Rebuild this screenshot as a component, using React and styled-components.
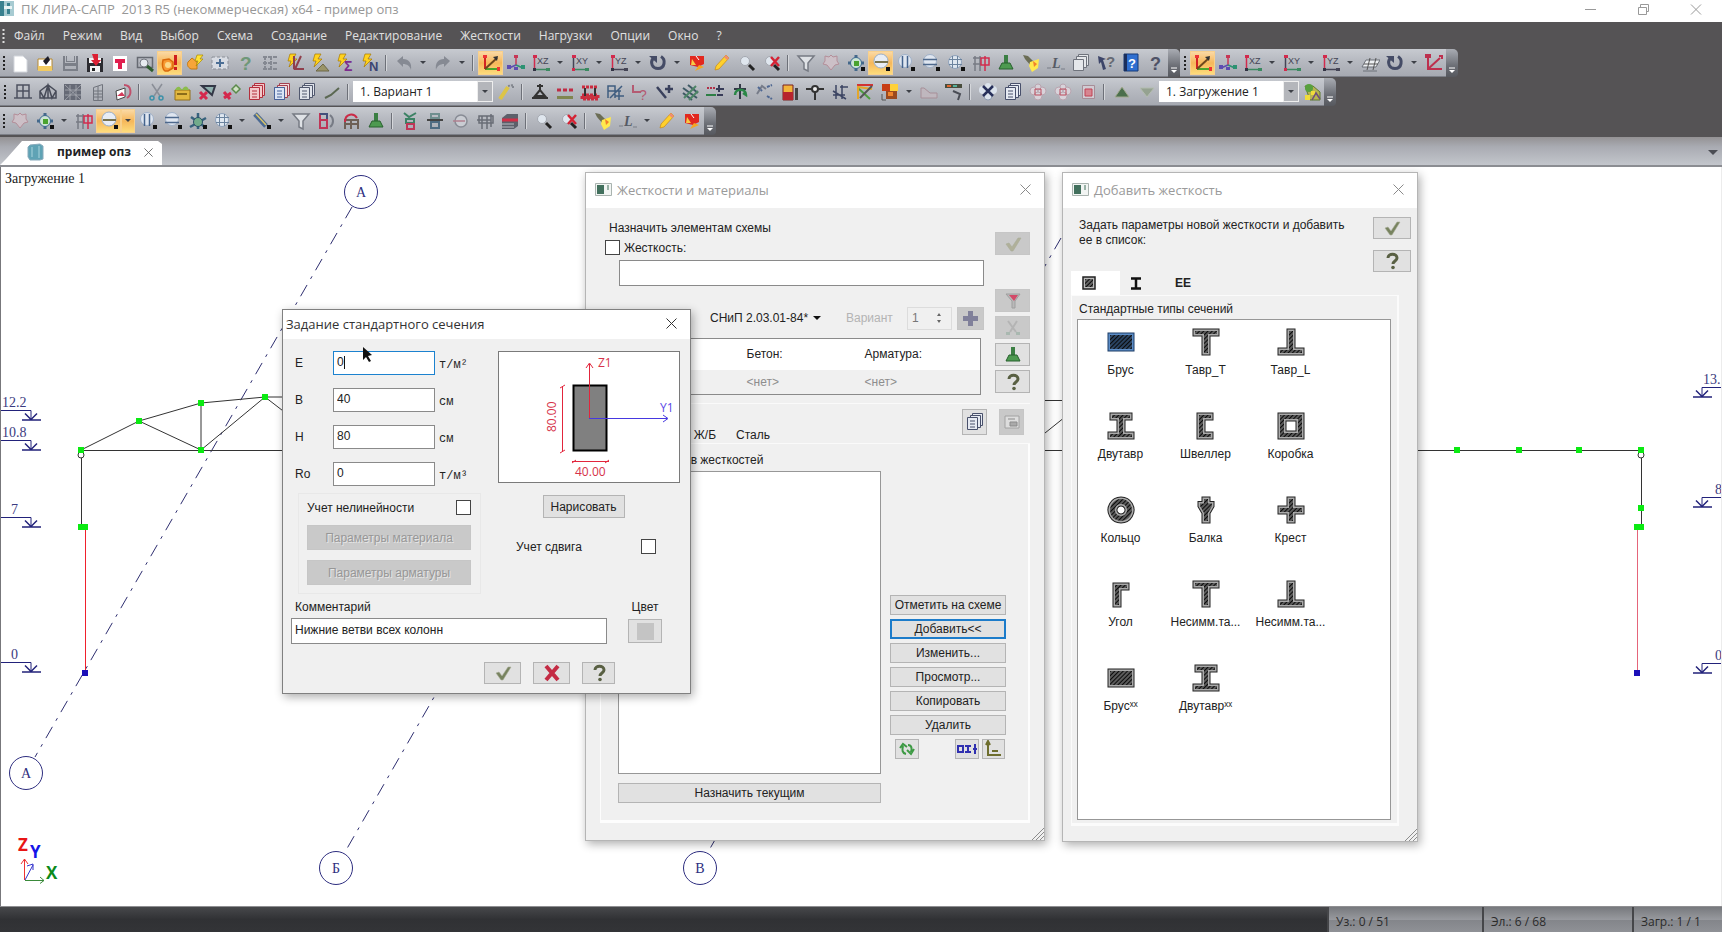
import React from 'react'
import styled, { createGlobalStyle, css } from 'styled-components'

const ui = "'Open Sans', 'Noto Sans', sans-serif"
const sans = "'Liberation Sans', Arial, sans-serif"
const serif = "'Liberation Serif', 'Times New Roman', serif"
const mono = "'Liberation Mono', 'Courier New', monospace"

const GlobalStyle = createGlobalStyle`
  * { box-sizing: border-box; }
  body { margin: 0; background: #555355; overflow: hidden; }
  button, input, select { font: inherit; color: inherit; margin: 0; }
  svg { display: block; }
`

const Page = styled.div`
  display: flex;
  flex-direction: column;
  min-height: 100vh;
  font-family: ${sans};
  font-size: 12px;
  color: #222;
`

/* ---------- window frame ---------- */

const TitleBar = styled.header`
  display: flex;
  align-items: center;
  height: 22px;
  background: #fff;
  color: #979797;
  font-family: ${ui};
  font-size: 13px;
  line-height: 18px;
  padding-bottom: 4px;
  gap: 5px;
`
const AppTitle = styled.span`
  flex: 1;
  white-space: pre;
`
const WindowButtons = styled.div`
  display: flex;
  gap: 33px;
  padding-right: 16px;
`
const PlainButton = styled.button`
  display: flex;
  align-items: center;
  justify-content: center;
  border: 0;
  padding: 0;
  background: none;
`
const MenuBar = styled.nav`
  display: flex;
  align-items: center;
  height: 27px;
  padding-left: 2px;
  background: #555355;
  color: #e0e0e0;
  font-family: ${ui};
  font-size: 12px;
  line-height: 16px;
`
const MenuItem = styled.a`
  color: inherit;
  text-decoration: none;
  padding: 0 9px;
`
const Grip = styled.span`
  width: ${p => (p.$wide ? 10 : 7)}px;
  height: 16px;
  background: radial-gradient(circle at 50% 2px, ${p => (p.$light ? '#ddd' : '#222')} 1px, transparent 1px) 0 0 / 6px 4px;
  background-repeat: repeat-y;
  background-position: center top;
  flex: none;
`

/* ---------- toolbars ---------- */

const ToolRow = styled.div`
  display: flex;
  height: ${p => p.$h}px;
  padding-bottom: 1px;
  background: #555355;
`
const ToolBar = styled.div`
  display: flex;
  align-items: center;
  height: 28px;
  background: linear-gradient(#c7cad0, #b6b9c0 45%, #a6a9b1);
  border-bottom: 1px solid #7c7f87;
`
const Tool = styled.button`
  display: flex;
  align-items: center;
  justify-content: center;
  width: 25px;
  height: 24px;
  padding: 0;
  flex: none;
  border: 1px solid transparent;
  background: none;
  ${p => p.$on && css`
    border-color: #f8d08c;
    background: linear-gradient(#fbd9a4, #f6b75a 50%, #fddc7c);
  `}
`
const Drop = styled(Tool)`
  width: 14px;
`
const Sep = styled.span`
  width: ${p => p.$w || 9}px;
  height: 16px;
  flex: none;
  background: linear-gradient(90deg, #6d7078 1px, #d5d7db 1px, #d5d7db 2px, transparent 2px) 3px 0 no-repeat;
`
const Cap = styled.button`
  display: flex;
  align-items: flex-end;
  justify-content: center;
  width: 12px;
  height: 28px;
  padding: 0 0 3px;
  border: 0;
  border-radius: 0 5px 4px 0;
  background: linear-gradient(#a9acb3, #6c6f76 60%, #56585e);
`
const Combo = styled.span`
  display: flex;
  align-items: stretch;
  width: 140px;
  height: 21px;
  background: #fff;
  font-family: ${ui};
  font-size: 12px;
`
const ComboSelect = styled.select`
  appearance: none;
  flex: 1;
  min-width: 0;
  border: 0;
  padding: 0 7px;
  background: none;
`
const ComboArrow = styled.span`
  display: flex;
  align-items: center;
  justify-content: center;
  width: 16px;
  border: 1px solid #eee;
  background: #b4b6bb;
`

const TabStrip = styled.div`
  display: flex;
  align-items: flex-end;
  justify-content: space-between;
  height: 30px;
  padding: 0 4px 0 0;
  background: linear-gradient(#949294, #a9abb2 35%, #c3c6cc);
  border-bottom: 2px solid #8b8d92;
`
const DocTab = styled.div`
  display: flex;
  align-items: center;
  height: 24px;
  width: 162px;
  padding: 0 0 2px 27px;
  background: #fff;
  clip-path: polygon(22px 0, 158px 0, 162px 3px, 162px 100%, 0 100%, 6px 18px);
  font: bold 12px/16px ${ui};
  gap: 13px;
`
const TabListButton = styled(PlainButton)`
  height: 26px;
`

/* ---------- work area ---------- */

const Canvas = styled.main`
  position: relative;
  flex: 1;
  background: #fff;
  border-left: 1px solid #77777b;
  border-right: 1px solid #ececec;
  overflow: hidden;
`
const Scene = styled.svg`
  width: 100%;
  height: auto;
  font-family: ${serif};
  font-size: 14px;
`
const StatusBar = styled.footer`
  display: flex;
  justify-content: flex-end;
  height: 26px;
  border-top: 1px solid #8f8f92;
  background: linear-gradient(#47484b, #303134 50%, #333437);
  font-family: ${ui};
  font-size: 12px;
`
const StatusCell = styled.span`
  display: flex;
  align-items: center;
  width: ${p => p.$w}px;
  padding: 4px 0 0 7px;
  border-left: 2px solid #454649;
  background: linear-gradient(#77797d, #97999e 50%, #83858a 52%, #8f9196);
  color: #2b2b2b;
  white-space: nowrap;
`

/* ---------- dialogs ---------- */

const Dialog = styled.section`
  position: absolute;
  left: ${p => p.$x}px;
  top: ${p => p.$y}px;
  width: ${p => p.$w}px;
  display: flex;
  flex-direction: column;
  border: 1px solid ${p => (p.$front ? '#808080' : '#b5b5b5')};
  background: #f0f0f0;
  box-shadow: 2px 3px 9px rgba(0, 0, 0, 0.32);
`
const DialogTitle = styled.header`
  display: flex;
  align-items: center;
  height: ${p => (p.$front ? 29 : 35)}px;
  padding: 0 13px 2px ${p => (p.$front ? 3 : 9)}px;
  gap: 5px;
  background: #fff;
  color: ${p => (p.$front ? '#333' : '#9a9a9a')};
  font-family: ${ui};
  font-size: 13px;
  line-height: 18px;
`
const TitleText = styled.h2`
  flex: 1;
  margin: 0;
  font: inherit;
`
const Columns = styled.div`
  display: flex;
  align-items: flex-start;
  justify-content: space-between;
`
const Stack = styled.div`
  display: flex;
  flex-direction: column;
  align-items: ${p => p.$align || 'stretch'};
  gap: ${p => p.$gap || 0}px;
`
const Caption = styled.label`
  line-height: 16px;
  white-space: nowrap;
  padding-left: ${p => p.$pad || 0}px;
`
const TextBox = styled.input`
  width: 100%;
  height: ${p => (p.$tall ? 26 : 24)}px;
  padding: 0 3px 2px;
  border: 1px solid ${p => (p.$active ? '#1c82cf' : '#8a8a8a')};
  background: #fff;
  outline: none;
`
const CheckBox = styled.input`
  appearance: none;
  width: 15px;
  height: 15px;
  flex: none;
  border: 1px solid #444;
  background: #fff;
`
const PushButton = styled.button`
  display: flex;
  align-items: center;
  justify-content: center;
  width: ${p => (p.$w ? p.$w + 'px' : '100%')};
  height: ${p => p.$h || 20}px;
  flex: none;
  padding: 0;
  border: ${p => (p.$active ? '2px solid #1d7cca' : '1px solid #b4b4b4')};
  background: #e1e1e1;
  white-space: nowrap;
  &:disabled {
    border-color: #c6c6c6;
    background: #c9c9c9;
    color: #979797;
    text-shadow: 1px 1px #e6e6e6;
  }
`
const Resize = styled.span`
  align-self: flex-end;
`

/* section parameters */
const ParamsBody = styled.div`
  display: flex;
  flex-direction: column;
  padding: 12px 8px 9px;
`
const ParamsTop = styled(Columns)`
  min-height: 248px;
  padding: 0 2px 0 4px;
`
const ParamGrid = styled.div`
  display: grid;
  grid-template-columns: 38px 102px 36px;
  align-items: center;
  row-gap: 13px;
`
const Unit = styled.span`
  padding: 3px 0 0 4px;
  font-family: ${mono};
  font-size: 12px;
`
const CaretBox = styled.span`
  position: relative;
  &::after {
    content: '';
    position: absolute;
    left: 11px;
    top: 5px;
    width: 1px;
    height: 13px;
    background: #111;
  }
`
const NonLinear = styled.div`
  display: flex;
  flex-direction: column;
  gap: 10px;
  width: 183px;
  margin: 7px 0 0 3px;
  padding: 6px 9px 8px 8px;
  border: 1px solid #e8e8e8;
`
const CheckLine = styled.div`
  display: flex;
  align-items: center;
  justify-content: space-between;
  width: 100%;
  height: 15px;
`
const Preview = styled.div`
  width: 182px;
  height: 132px;
  border: 1px solid #7a7a7a;
  background: #fff;
`
const DrawLine = styled.div`
  padding-right: 11px;
`
const ShearLine = styled(CheckLine)`
  padding: 0 24px 0 18px;
  margin-top: 9px;
`
const CommentRow = styled.div`
  display: flex;
  gap: 21px;
`
const CommentField = styled.div`
  display: flex;
  flex-direction: column;
  gap: 3px;
  width: 316px;
`
const Swatch = styled.span`
  width: 17px;
  height: 17px;
  background: #c4c4c4;
`
const Confirm = styled.div`
  display: flex;
  justify-content: flex-end;
  gap: 12px;
  padding: 18px 67px 0 0;
`

/* stiffness list */
const StiffBody = styled.div`
  display: flex;
  flex-direction: column;
  padding: 12px 14px 0 19px;
`
const AssignMain = styled.div`
  width: 379px;
  display: flex;
  flex-direction: column;
`
const CheckLabel = styled.label`
  display: flex;
  align-items: center;
  gap: 4px;
  height: 15px;
  margin: 4px 0 5px;
`
const Indent = styled.div`
  padding-left: 14px;
`
const NormRow = styled.div`
  display: flex;
  align-items: center;
  justify-content: flex-end;
  margin: 20px 0 8px;
  height: 24px;
`
const NormSelect = styled.label`
  display: flex;
  align-items: center;
  margin-right: 25px;
  select {
    appearance: none;
    border: 0;
    background: none;
    padding: 0 4px 0 0;
  }
`
const Dim = styled.label`
  width: 61px;
  color: #b4b4b4;
`
const Spin = styled.div`
  display: flex;
  align-items: center;
  width: 45px;
  height: 23px;
  margin-right: 5px;
  border: 1px solid #dcdcdc;
  input {
    width: 28px;
    border: 0;
    background: none;
    padding: 0 4px;
    color: #777;
  }
`
const Materials = styled.table`
  width: 364px;
  margin-left: 12px;
  height: 56px;
  border-collapse: collapse;
  border: 1px solid #8a8a8a;
  th, td {
    padding: 0;
    text-align: left;
    font-weight: normal;
  }
  th { height: 31px; background: #fff; }
  td { height: 25px; color: #8d8d8d; }
`
const SideTools = styled.div`
  display: flex;
  flex-direction: column;
  gap: 4px;
  padding-top: 12px;
  button:first-child { margin-bottom: 30px; }
`
const StiffTabs = styled.div`
  display: flex;
  align-items: flex-end;
  justify-content: flex-end;
  height: 41px;
  margin-top: 8px;
  padding-right: 6px;
  border-top: 1px solid #fafafa;
  border-bottom: 1px solid #fafafa;
`
const StiffTab = styled.button`
  border: 0;
  background: none;
  padding: 0;
  line-height: 16px;
  margin-right: ${p => p.$after}px;
`
const SquareTools = styled.div`
  display: flex;
  gap: 12px;
  align-self: flex-start;
  padding-top: 5px;
`
const StiffPanel = styled.div`
  display: flex;
  align-items: flex-end;
  justify-content: space-between;
  margin-left: -5px;
  padding: 8px 22px 17px 17px;
  border: solid #fdfdfd;
  border-width: 0 2px 3px 1px;
`
const ListBox = styled.div`
  width: ${p => p.$w}px;
  height: ${p => p.$h}px;
  margin: 3px 0 9px;
  border: 1px solid #979797;
  background: #fff;
`
const Actions = styled.div`
  display: flex;
  flex-direction: column;
  gap: 4px;
  width: 116px;
  padding-bottom: 44px;
`
const SmallTools = styled.div`
  display: flex;
  gap: 3px;
  padding: 0 0 0 5px;
  button:first-child { margin-right: 33px; }
`

/* section picker */
const PickBody = styled.div`
  display: flex;
  flex-direction: column;
  padding: 9px 6px 0 8px;
`
const PickHead = styled(Columns)`
  height: 54px;
  padding-left: 8px;
  p {
    margin: 1px 0 0;
    width: 290px;
    line-height: 15px;
  }
`
const PickTabs = styled.div`
  display: flex;
  align-items: flex-end;
  height: 24px;
`
const PickTab = styled.button`
  display: flex;
  align-items: center;
  justify-content: ${p => (p.$on ? 'flex-start' : 'center')};
  width: ${p => p.$w}px;
  height: 24px;
  padding: 0 0 0 ${p => (p.$on ? 11 : 0)}px;
  border: 0;
  background: ${p => (p.$on ? '#fff' : 'none')};
  font-weight: bold;
`
const PickPanel = styled.div`
  margin-right: 12px;
  padding: 5px 6px 3px 5px;
  border: 1px solid #fbfbfb;
  border-right-width: 2px;
  border-bottom-width: 3px;
  h3 { margin: 0 0 0 2px; font: inherit; line-height: 16px; }
`
const SectionList = styled.div`
  display: grid;
  grid-template-columns: repeat(3, 85px);
  grid-auto-rows: 84px;
  height: 501px;
  margin-top: 2px;
  border: 1px solid #979797;
  background: #fff;
`
const SectionItem = styled.button`
  display: flex;
  flex-direction: column;
  align-items: center;
  gap: 6px;
  padding: 8px 0 0;
  border: 0;
  background: none;
  line-height: 16px;
  white-space: nowrap;
`
const DialogFoot = styled.div`
  display: flex;
  justify-content: flex-end;
  align-items: flex-end;
  height: ${p => p.$h}px;
`
const Pointer = styled.svg`
  position: absolute;
  left: 362px;
  top: 180px;
`

/* ---------- icons ---------- */

const Bolt = () => <path d='M5 1h6l-3 5h4L4 14l2-6H3z' fill='#ffd21e' stroke='#a87a00' strokeWidth='.7' />
const Lens = () => (
  <g>
    <circle cx='8' cy='8' r='4.5' fill='#dfe6ee' stroke='#a4a8b0' />
    <path d='M12 12l5 5' stroke='#222' strokeWidth='3' />
  </g>
)
const Dot = () => <path d='M15 14h4v4h-4z' fill='#111' />
const Plane = ({ t, a, b }) => (
  <g>
    <path d='M3.500 2v14' stroke={a} strokeWidth='1.500' />
    <path d='M3 16.500h15' stroke={b} strokeWidth='1.500' />
    <path d='M2 2h4v3h-4z' fill='#d22a4c' /><path d='M15 15h4v3h-4z' fill={b} /><path d='M2 15h3v3h-3z' fill={a === '#445' ? '#d22a4c' : '#334'} />
    <text x='6' y='11' fontSize='9' fontFamily='Liberation Sans' fill='#445'>{t}</text>
  </g>
)
const Pages = ({ c, f = '#fff' }) => (
  <g fill={f} stroke={c}>
    <path d='M7.500 1.500h10v12h-10z' /><path d='M5.500 3.500h10v12h-10z' /><path d='M2.500 5.500h10v12h-10z' />
    <path d='M5 9h5M5 12h5M5 15h5' />
  </g>
)

const icons = {
  create: <path d='M4 3h9l4 4v12H4z' fill='#fff' stroke='#d3d6dc' />,
  open: <g><path d='M3 6h14v11H3z' fill='#fff' stroke='#b88a2e' /><path d='M3 13h14v5H3z' fill='#f1ca62' /><path d='M13 3l-5 5 3 4 4-5z' fill='#1d1d28' /></g>,
  save: <g fill='#7b7f88'><path d='M3 3h2v15H3zM16 3h2v15h-2zM3 10h15v3H3zM6 3h1v5h7V3h1v6H6zM5 16h12v2H5z' /></g>,
  saveAs: <g><path d='M2 5h16v14H2z' fill='#2b2b30' /><path d='M4 5h12v5H4zM5 13h10v6H5z' fill='#f4f4f4' /><path d='M7 1h6v6h3l-5 6-5-6h3z' fill='#dc2033' /><path d='M7 15h3v3H7z' fill='#222' /></g>,
  report: <g><path d='M3 3h14v15H3z' fill='#fff' /><path d='M5 6h10v4h-3v6H8v-6H5z' fill='#e01f4f' /></g>,
  preview: <g><path d='M2.500 4.500h15v10h-15z' fill='none' stroke='#666a72' strokeWidth='1.500' /><circle cx='9' cy='10' r='4' fill='#e7ebef' stroke='#747881' /><path d='M12 13l6 5' stroke='#2e5b2e' strokeWidth='3' /></g>,
  pack: <g><path d='M3 7l6-1 4 3v6l-5 3H5c-3-2-3-6-2-11z' fill='#f79a33' stroke='#d9690b' strokeWidth='1.500' /><circle cx='8' cy='12' r='3' fill='#fbd98a' /><path d='M14 2h3v10h-3zM14 14h3v3h-3z' fill='#cf1d1d' /></g>,
  calc: <g><path d='M3 9l4-4 5 4v7H6c-4-2-4-5-3-7z' fill='#f7a53a' stroke='#c47a15' /><path d='M12 2h6l-3 4h3l-7 7 2-5h-3z' fill='#ffe338' stroke='#a98800' strokeWidth='.7' /></g>,
  settings: <g><path d='M2 4h16v12H2z' fill='#d8dce3' stroke='#8b9099' strokeDasharray='3 2' /><path d='M9 6h2v3h3v2h-3v3H9v-3H6V9h3z' fill='#4c6f96' /></g>,
  ask: <text x='5' y='17' fontSize='19' fontWeight='bold' fontFamily='Liberation Sans' fill='#6f9878'>?</text>,
  tableGray: <g stroke='#858992' fill='none'><path d='M3 4h14M3 10h14M3 16h14M5 3v14M11 3v14' strokeWidth='2' strokeDasharray='4 1' /></g>,
  boltL: <g><Bolt /><path d='M9 3v13M16 3l-6 13h9' stroke='#8f3f4c' fill='none' strokeWidth='2' /></g>,
  boltTri: <g><Bolt /><path d='M6 18l7-7 6 7z' fill='#9a9468' stroke='#6c6747' /></g>,
  boltE: <g><Bolt /><text x='9' y='18' fontSize='14' fontWeight='bold' fontFamily='Liberation Sans' fill='#7c2c8e'>Σ</text></g>,
  boltN: <g><Bolt /><text x='9' y='18' fontSize='13' fontWeight='bold' fontFamily='Liberation Sans' fill='#3c4573'>N</text></g>,
  undo: <path d='M3 8l6-5v3c6 0 9 4 8 11-1-4-4-6-8-6v3z' fill='#868a93' />,
  redo: <path d='M17 8l-6-5v3c-6 0-9 4-8 11 1-4 4-6 8-6v3z' fill='#868a93' />,
  axes: <g strokeWidth='2' fill='none'><path d='M4 2v14' stroke='#d22323' /><path d='M4 16h14' stroke='#4aa52c' /><path d='M4 16L16 5' stroke='#70481d' /><path d='M17 3l-1 5-4-4z' fill='#333' stroke='none' /><path d='M2 2h4v3H2zM16 14h3v4h-3z' fill='#e33' stroke='none' /></g>,
  axes3: <g strokeWidth='1.500'><path d='M10 2v10' stroke='#c73756' /><path d='M10 12l-7 3' stroke='#5d4cb1' /><path d='M10 12l7 3' stroke='#2c9272' /><path d='M8 2h4v3H8z' fill='#c73756' /><path d='M1 12h4v4H1zM8 14h4v3H8z' fill='#5d4cb1' /><path d='M15 12h4v4h-4z' fill='#2c9272' /></g>,
  xz: <Plane t='XZ' a='#d22a4c' b='#3b8a60' />,
  xy: <Plane t='XY' a='#445' b='#3b8a60' />,
  yz: <Plane t='YZ' a='#d22a4c' b='#445' />,
  rotate: <g><path d='M5 5.500c-3 4-1 10 5 10 7 0 8-9 3-12' fill='none' stroke='#454c66' strokeWidth='3' /><path d='M1 3h8v7z' fill='#454c66' /></g>,
  fit: <g><path d='M3 3h14v8l-6 3-8-2z' fill='#e2281f' /><path d='M4 12h5l-4-6z' fill='#f7c945' /><path d='M8 18l4-6 5 2z' fill='#f5a623' /><path d='M9 3l3 4' stroke='#fff' /></g>,
  pencil: <g><path d='M3 17l1-4L14 2l3 3L7 16z' fill='#ffd02c' stroke='#c88a12' strokeWidth='.7' /><path d='M14 2l3 3-2 2-3-3z' fill='#ee8d75' /></g>,
  pan: <Lens />,
  zoomOff: <g><Lens /><path d='M9 4l8 9M17 4l-8 9' stroke='#d52334' strokeWidth='2.500' /></g>,
  filter: <path d='M2 3h16l-6 7v8l-4-2v-6z' fill='#dfe2e6' stroke='#777b84' strokeWidth='1.500' />,
  poly: <path d='M4 3l4 1 2-2 2 2 4-1v5l2 3-4 1-4 5-4-5-4-1 2-3z' fill='#ccc0c7' stroke='#b48e99' />,
  nodes: <g><path d='M10 2v16M2 10h16' stroke='#44688a' strokeWidth='3' /><circle cx='10' cy='10' r='5.500' fill='#cde4d4' stroke='#3c6892' /><path d='M8 8h5v5H8z' fill='#4aa32f' /><Dot /></g>,
  elemY: <g><circle cx='10' cy='8' r='7' fill='#e8edf5' stroke='#9aafc9' /><path d='M4 8h13v2H4z' fill='#77724e' /><Dot /></g>,
  elemX: <g><circle cx='9' cy='8' r='6.500' fill='#dfe6f0' stroke='#9fb0c8' /><path d='M6.500 3v12M11.500 3v12' stroke='#44638d' strokeWidth='1.500' /><Dot /></g>,
  elemH: <g><circle cx='9' cy='8' r='6.500' fill='#dfe6f0' stroke='#9fb0c8' /><path d='M2 6.500h14M2 11.500h14' stroke='#4d688c' strokeWidth='1.500' /><Dot /></g>,
  elemGrid: <g><circle cx='9' cy='9' r='6.500' fill='#dfe7f0' stroke='#8fa2bb' /><path d='M3 6.500h13M3 11.500h13M6.500 3v12M11.500 3v12' stroke='#6b839e' /><Dot /></g>,
  star: <g><path d='M10 2v16M2 16l16-9M3 6l14 10' stroke='#37627d' strokeWidth='2.500' /><circle cx='10' cy='11' r='4.500' fill='#72ab8b' stroke='#2c506a' /><Dot /></g>,
  tool: <g><path d='M3 3l11 12' stroke='#4c6a93' strokeWidth='5' /><path d='M4 3l10 11' stroke='#d8c569' strokeWidth='1.500' /><Dot /></g>,
  frame: <g fill='none' strokeWidth='1.500'><path d='M4 3v15M9 3v15M2 5h8M2 11h8' stroke='#777b84' /><path d='M10 5h8v7h-8zM14 3v15' stroke='#d22c4d' /></g>,
  person: <g><path d='M8 2h4v9H8z' fill='#3b7f43' /><path d='M6 10h8l3 6H3z' fill='#4d9a50' stroke='#28602e' /></g>,
  torch: <g><path d='M2 2l5 1 7 7-4 3-6-7z' fill='#6b6d55' /><path d='M9 9l9-3-1 9-6 4-3-6z' fill='#ffe94d' /><path d='M12 8l4 3-3 3z' fill='#f0812b' /></g>,
  origin: <g><text x='6' y='15' fontSize='14' fontStyle='italic' fontWeight='bold' fontFamily='Liberation Serif' fill='#555a64'>L</text><path d='M1 15h4M15 16h4' stroke='#8b8f98' strokeWidth='1.500' /></g>,
  copy: <g fill='#e5e7ea' stroke='#6f737c'><path d='M7.500 1.500h10v11h-10z' /><path d='M5.500 3.500h10v11h-10z' /><path d='M2.500 6.500h10v11h-10z' /></g>,
  whats: <g><path d='M2 3l8 3-3 1 3 9-3 1-2-8-2 2z' fill='#3d4569' /><text x='10' y='14' fontSize='15' fontWeight='bold' fontFamily='Liberation Sans' fill='#666a73'>?</text></g>,
  book: <g><path d='M3 1h14v17H3z' fill='#2f6fd0' stroke='#173a78' /><path d='M3 1h3v17H3z' fill='#1b2f5c' /><text x='7' y='15' fontSize='13' fontWeight='bold' fontFamily='Liberation Sans' fill='#fff'>?</text></g>,
  question: <text x='4' y='17' fontSize='18' fontWeight='bold' fontFamily='Liberation Sans' fill='#4e5266'>?</text>,
  slabs: <g><path d='M2 14l4-7h14l-4 7zM3 18h14' fill='#eef0f2' stroke='#6d7179' /><path d='M7 17l3-12M13 17l3-12M4 11h14' stroke='#555' /></g>,
  axesRed: <g strokeWidth='2' stroke='#bd304e' fill='none'><path d='M4 2v14h14M4 16L16 5' /><path d='M2 2h4v2H2zM15 3h3v3' /></g>,

  windows: <path d='M4 3h12v13H4zM10 3v13M4 9h12M1 16h18' fill='none' stroke='#4d5160' strokeWidth='1.500' />,
  dome: <path d='M2 16V9l8-6 8 6v7zM10 3v13M2 9l4 7 4-13 4 13 4-7' fill='none' stroke='#474b58' strokeWidth='1.500' />,
  mesh: <g><path d='M1 2h17v16H1z' fill='#666a76' /><path d='M2 8h16M2 13h16M7 3v15M13 3v15M2 3l16 15M18 3L2 18' stroke='#a9acb4' strokeWidth='.8' /></g>,
  tower: <g fill='none' stroke='#70747d'><path d='M5.500 5.500l9-3v16h-9zM5 9h10M5 12h10M5 15h10M10 4v14' /></g>,
  reload: <g><path d='M3 9l9-3v9l-8 3z' fill='#fff' stroke='#444' /><path d='M4 14l5-4 3 4' fill='#d33b5b' /><path d='M11 3c8 0 8 10 3 13' fill='none' stroke='#c0506b' strokeWidth='2' /></g>,
  cut: <g strokeWidth='1.500' fill='none'><path d='M5 2l8 12M15 2L7 14' stroke='#8a8e97' /><circle cx='5' cy='16' r='2' stroke='#3c91a9' /><circle cx='14' cy='16' r='2' stroke='#3c91a9' /></g>,
  box: <g><path d='M3 8h15v10H3z' fill='#e3b83f' stroke='#94701b' /><path d='M3 8c3-6 6-2 7 0 3-6 6-3 7 0z' fill='#8cbc4c' /><path d='M5 12h10' stroke='#8b6c1a' strokeWidth='2' /></g>,
  delElem: <g><path d='M5 4h13l-3 9z' fill='#8fb0ae' stroke='#333746' strokeWidth='2' /><path d='M3 10l7 7M10 10l-7 7' stroke='#d4284d' strokeWidth='3' /></g>,
  delNode: <g><path d='M10 7l4-4 4 4-4 4z' fill='#cfe0c3' stroke='#5a8a4a' strokeWidth='1.500' /><path d='M2 10l6 7M9 11l-7 5' stroke='#d4284d' strokeWidth='3' /></g>,
  pagesRed: <Pages c='#b32f3d' f='#f2c8c9' />,
  pagesMix: <g><Pages c='#a4404f' f='#f2dcdc' /><path d='M2.500 5.500h10v12h-10z' fill='#dbe5f5' stroke='#46639a' /><path d='M5 9h5M5 12h5M5 15h5' stroke='#46639a' /></g>,
  pagesBlue: <Pages c='#51586e' f='#dfe3ea' />,
  wand: <path d='M3 16l6-3 8-7' fill='none' stroke='#5b6852' strokeWidth='2' />,
  editGray: <g><path d='M4 17L12 5' stroke='#dcc447' strokeWidth='4' /><path d='M12 4l5-1v4' fill='none' stroke='#83878f' strokeDasharray='2 1' strokeWidth='2' /></g>,
  support: <path d='M10 2v6M7 4h6M10 8l-5 6h10zM2 16h16' fill='none' stroke='#333' strokeWidth='2' />,
  rigid: <g><path d='M2 14h16v3H2z' fill='#7f8650' /><path d='M2 8h16' stroke='#c02c45' strokeWidth='3' strokeDasharray='4 2' /></g>,
  redFrame: <g><path d='M2 5h16M2 13h16v4H2z' stroke='#cc2c3f' fill='#c73a42' strokeWidth='3' strokeDasharray='3 1' /><path d='M5 6v8M15 6v8' stroke='#333' strokeWidth='2' /></g>,
  blueFrame: <g stroke='#3f5d80' fill='none' strokeWidth='1.500'><path d='M3 16V4h7v12M3 9h13M5 16l12-12M14 9v9M10 14h9' /></g>,
  hinge: <g><path d='M3 3v7h8' stroke='#b45b72' fill='none' strokeWidth='2' /><text x='9' y='18' fontSize='14' fontFamily='Liberation Sans' fill='#b45b72'>?</text></g>,
  addBar: <path d='M2 5l9 11M14 3v8M10 7h8' fill='none' stroke='#39405c' strokeWidth='2.500' />,
  addMesh: <g stroke='#3e5964' strokeWidth='2'><path d='M3 6l14 10M3 11l9 7M8 3l10 8' /><path d='M4 16L16 4M9 18l9-9' stroke='#4d8566' /></g>,
  addLoad: <g strokeWidth='2'><path d='M1 13h10' stroke='#2d7f45' /><path d='M2 6h8' stroke='#b13048' strokeDasharray='2 1' /><path d='M14 3v7M11 7h8M12 13h6' stroke='#383c58' /></g>,
  moment: <g><path d='M10 2v15M4 7h12' stroke='#333846' strokeWidth='2' /><path d='M5 13c0-7 11-7 11 0l-3-2' stroke='#2a8746' fill='none' strokeWidth='2.500' /></g>,
  local: <g strokeWidth='2' fill='none'><path d='M2 12l5-8 4 3' stroke='#777c89' /><path d='M12 14l5 3M12 5l5-2M3 5l4 4' stroke='#4e6792' strokeDasharray='3 1' /></g>,
  stiff: <g><path d='M3 3h10v15H3z' fill='#f3b43a' stroke='#7a2020' /><path d='M3 10h10v8H3z' fill='#b7232d' /><path d='M15 6h3v12h-3z' fill='#444' /></g>,
  tee: <g stroke='#333' fill='none' strokeWidth='2'><path d='M1 7h6M13 7h6M10 10v8' /><circle cx='10' cy='7' r='3' fill='#eee' /></g>,
  crossBars: <path d='M3 9l13 8M3 13h12M6 3v14M12 3v14M10 5h8' fill='none' stroke='#3c4563' strokeWidth='1.500' />,
  rainbow: <g strokeWidth='2' fill='none'><path d='M2 3h16' stroke='#d13333' /><path d='M3 6l12 11' stroke='#4d9e3e' /><path d='M3 17V5l14 2' stroke='#e3a62b' /><path d='M5 16l12-12' stroke='#555' /></g>,
  palette: <g><path d='M2 2h8v7H2z' fill='#c73d15' /><path d='M10 2h8v7h-8z' fill='#ffd13a' /><path d='M6 9h11v8H6z' fill='#9c4a1e' /><path d='M8 10h5v4H8z' fill='#f0842c' /><path d='M2 12v6h4' stroke='#555' fill='none' /></g>,
  slope: <path d='M2 6h3l6 5h7v5H2z' fill='#bfb7be' stroke='#a78f98' />,
  ruler: <g><path d='M1 2h17v4H1z' fill='#494d3c' /><path d='M3 3h4v2H3z' fill='#e3672d' /><path d='M9 3h4v2H9z' fill='#55b09a' /><path d='M9 9l7 3-2 6' stroke='#4a4d55' fill='none' strokeWidth='2' /></g>,
  knot: <g><circle cx='5' cy='8' r='4' fill='#dbe3ec' /><circle cx='15' cy='8' r='4' fill='#dbe3ec' /><circle cx='10' cy='14' r='4' fill='#dbe3ec' stroke='#8e9bb0' /><circle cx='10' cy='4' r='3' fill='#dbe3ec' /><path d='M5 4l10 10M15 4L5 14' stroke='#27305a' strokeWidth='2.500' /></g>,
  pagesNum: <Pages c='#48506b' f='#e6eaf2' />,
  knotRed: <g fill='#d8d3da' stroke='#b9a5b0'><circle cx='6' cy='9' r='4' /><circle cx='14' cy='9' r='4' /><circle cx='10' cy='5' r='3' /><circle cx='10' cy='14' r='4' /><path d='M7 7h6v6H7z' stroke='#bd4a5c' fill='none' /></g>,
  square: <g fill='none' stroke='#a78d97'><path d='M4.500 3.500h12v13h-12z' fill='#d1ccd3' /><path d='M7 7h7v7H7z' stroke='#c04255' fill='#d78590' /></g>,
  up: <path d='M3 15l7-10 7 10z' fill='#4b6f4c' stroke='#a3aa90' />,
  down: <path d='M3 6h14l-7 9z' fill='#95a291' stroke='#b3bcb0' />,
  loads: <g><path d='M3 4h8l7 6v8H8z' fill='#b7b451' stroke='#5f7a31' /><circle cx='7' cy='6' r='4' fill='#58a03d' /><path d='M3 13h5v5H3zM9 9h4v4H9z' fill='#f0dc3a' /><path d='M10 18l4-7 4 6' fill='none' stroke='#6d4d7c' strokeWidth='1.500' /></g>,
  mirror: <g fill='none' strokeWidth='2'><path d='M4 3h7v14H4zM3 9h9' stroke='#bf3657' /><path d='M4 3h7v5' stroke='#44507c' /><path d='M14 4c4 3 4 9 0 12' stroke='#777b85' /></g>,
  arcFrame: <g fill='none' strokeWidth='2'><path d='M4 18V9h13v9M4 13h13M10 9v9' stroke='#6d5f55' /><path d='M4 11c0-9 9-9 12-4' stroke='#cb2c48' /></g>,
  checkFrame: <g fill='none' strokeWidth='2'><path d='M6 8h8v4H6zM4 2l5 4 7-4' stroke='#3c8264' /><path d='M7 13h7v5H7z' stroke='#bf3657' /></g>,
  grayFrame: <g fill='none' strokeWidth='2'><path d='M6 3h8v4H6z' stroke='#6f8f8f' /><path d='M2 9h16' stroke='#444' /><path d='M6 11h8v6H6z' stroke='#4f6c82' /></g>,
  cylinder: <g fill='#c9ccd2' stroke='#888c95' strokeWidth='1.500'><circle cx='11' cy='10' r='6' /><path d='M3 10h12' stroke='#b0808f' /></g>,
  scaffold: <path d='M4 5h14v7H4zM7 5v13M12 5v13M16 3v13M2 9h14' fill='none' stroke='#696d76' strokeWidth='1.500' />,
  building: <g><path d='M2 7l5-4h11v12l-4 3H2z' fill='#5c606a' /><path d='M2 9h16' stroke='#d12f46' strokeWidth='3' /><path d='M2 13h12M2 16h12' stroke='#b9bcc3' /></g>
}

const Icon = ({ name }) => <svg width='20' height='20' viewBox='0 0 20 20' aria-hidden='true'>{icons[name]}</svg>

const Triangle = ({ c = '#3d4047', s = 6 }) => (
  <svg width={s} height={s / 2} viewBox='0 0 6 3' aria-hidden='true'><path d='M0 0h6L3 3z' fill={c} /></svg>
)
const Cross = ({ c, s = 11 }) => (
  <svg width={s} height={s} viewBox='0 0 11 11' aria-hidden='true'><path d='M.5.5l10 10M10.500.5l-10 10' stroke={c} fill='none' /></svg>
)

const topTools = ['create', 'open', 'save', 'saveAs', 'report', 'preview', '*pack', 'calc', 'settings', 'ask', 'tableGray', 'boltL', 'boltTri', 'boltE', 'boltN', '|', 'undo', 'v', 'redo', 'v', '|', '*axes', 'axes3', 'xz', 'v', 'xy', 'v', 'yz', 'v', 'rotate', 'v', 'fit', 'pencil', 'pan', 'zoomOff', '|', 'filter', 'poly', 'nodes', '*elemY', 'elemX', 'elemH', 'elemGrid', 'frame', 'person', 'torch', 'origin', 'copy', 'whats', 'book', 'question']
const viewTools = ['*axes', 'axes3', 'xz', 'v', 'xy', 'v', 'yz', 'v', 'slabs', 'rotate', 'v', 'axesRed']
const schemeTools = ['windows', 'dome', 'mesh', 'tower', 'reload', '|', 'cut', 'box', 'delElem', 'delNode', 'pagesRed', 'pagesMix', 'pagesBlue', 'wand', '|']
const loadTools = ['editGray', '|', 'support', 'rigid', 'redFrame', 'blueFrame', 'hinge', 'addBar', 'addMesh', 'addLoad', 'moment', 'local', 'stiff', 'tee', 'crossBars', 'rainbow', 'palette', 'v', 'slope', 'ruler', '|', 'knot', 'pagesNum', 'knotRed', 'knotRed', 'square', '|', 'up', 'down']
const selectTools = ['poly', 'nodes', 'v', 'frame', '*elemY', '*v', 'elemX', 'elemH', 'star', 'elemGrid', 'v', 'tool', 'v', 'filter', 'mirror', 'arcFrame', 'person', '|', 'checkFrame', 'grayFrame', 'cylinder', 'scaffold', 'building', '|', 'pan', 'zoomOff', '|', 'torch', 'origin', 'v', 'pencil', 'fit']

const Tools = ({ items }) => items.map((item, i) => {
  if (item === '|') return <Sep key={i} />
  const on = item[0] === '*'
  const name = on ? item.slice(1) : item
  return name === 'v'
    ? <Drop key={i} $on={on} aria-label='more'><Triangle /></Drop>
    : <Tool key={i} $on={on} aria-label={name}><Icon name={name} /></Tool>
})

const CapButton = () => (
  <Cap aria-label='toolbar options'>
    <svg width='8' height='7' viewBox='0 0 8 7'><path d='M1 1h6' stroke='#fff' /><path d='M1 3h6L4 6z' fill='#fff' /></svg>
  </Cap>
)

const ComboBox = ({ label, value }) => (
  <Combo>
    <ComboSelect aria-label={label} defaultValue={value}><option>{value}</option></ComboSelect>
    <ComboArrow><Triangle /></ComboArrow>
  </Combo>
)

const CheckIcon = ({ c = '#77835f' }) => (
  <svg width='18' height='18' viewBox='0 0 18 18' aria-hidden='true'><path d='M2 9l3-1 3 4 6-9h3L9 16H7z' fill={c} stroke='#a9ac98' strokeWidth='.6' /></svg>
)
const QIcon = () => (
  <svg width='18' height='18' viewBox='0 0 18 18' aria-hidden='true'>
    <path d='M5 6c0-5 9-5 9 0 0 3-4 3-4 6' fill='none' stroke='#596043' strokeWidth='3' /><circle cx='10' cy='15.500' r='1.800' fill='#596043' />
  </svg>
)
const RedX = () => (
  <svg width='18' height='18' viewBox='0 0 18 18' aria-hidden='true'><path d='M3 2l12 14M15 2L3 16' stroke='#c42b44' strokeWidth='4' /></svg>
)
const DialogIcon = () => (
  <svg width='17' height='13' viewBox='0 0 17 13' aria-hidden='true'>
    <path d='M.5.5h16v12H.5z' fill='#f2f5f3' stroke='#a9b3af' /><path d='M2 2h7v9H2z' fill='#42705d' /><path d='M13 2v5' stroke='#42705d' />
  </svg>
)
const ResizeGrip = () => (
  <Resize><svg width='13' height='13' viewBox='0 0 13 13' aria-hidden='true'><path d='M1 13L13 1M5 13l8-8M9 13l4-4' stroke='#8c8c8c' /></svg></Resize>
)

/* ---------- structural scheme ---------- */

const Level = ({ x, y, text, tx, right }) => (
  <g stroke='#22227a' fill='none'>
    <path d={right ? `M1721 ${y}H${x}v9` : `M0 ${y}H${x}v9`} />
    <path d={`M${x - 6} ${y + 3}l6 6 6-6M${x - 9} ${y + 9.5}h19`} strokeWidth='1.500' />
    <text x={tx} y={y - 4} fill='#3b3b80' stroke='none'>{text}</text>
  </g>
)
const AxisMark = ({ x, y, text }) => (
  <g>
    <circle cx={x} cy={y} r='16.500' fill='#fff' stroke='#2e2e80' />
    <text x={x} y={y + 5} textAnchor='middle' fill='#2e2e80'>{text}</text>
  </g>
)
const nodes = [[81, 450], [139, 421], [201, 403], [201, 450], [265, 397], [81, 527], [85, 527], [1457, 450], [1519, 450], [1579, 450], [1641, 450], [1641, 508], [1641, 527], [1637, 527]]

const Scheme = () => (
  <Scene viewBox='1 167 1720 739' role='img' aria-label='Расчетная схема'>
    <text x='5' y='183' fill='#222'>Загружение 1</text>
    <g stroke='#2e2e70' strokeDasharray='13 7 3 7'>
      <path d='M352 207L35 757' /><path d='M698 238L345 852' /><path d='M1061 238L708 852' />
    </g>
    <AxisMark x={361} y={192} text='А' />
    <AxisMark x={26} y={773} text='А' />
    <AxisMark x={336} y={868} text='Б' />
    <AxisMark x={700} y={868} text='В' />
    <g stroke='#333' fill='none'>
      <path d='M81 450L139 421L201 403L265 397H300M139 421L201 450V403M201 450L265 397L300 424' />
      <path d='M81 450.500H1641M81.500 450V527M1641.500 450V527' />
      <path d='M1040 400.500h30M1040 437l30-24' />
    </g>
    <path d='M85.500 527V673' stroke='#f0202c' /><path d='M1637.500 527V673' stroke='#e5657a' />
    <g fill='#fff' stroke='#333'><circle cx='81' cy='455' r='3' /><circle cx='1641' cy='455' r='3' /></g>
    {nodes.map(([x, y]) => <rect key={x + '-' + y} x={x - 3} y={y - 3} width='6' height='6' fill='#0bea12' />)}
    <path d='M82 670h6v6h-6zM1634 670h6v6h-6z' fill='#1c10b8' />
    <Level x={31} y={410.5} text='12.2' tx={2} />
    <Level x={31} y={440.5} text='10.8' tx={2} />
    <Level x={31} y={517.5} text='7' tx={11} />
    <Level x={31} y={662.5} text='0' tx={11} />
    <Level right x={1702} y={387.5} text='13.' tx={1703} />
    <Level right x={1702} y={497.5} text='8' tx={1715} />
    <Level right x={1702} y={663.5} text='0' tx={1715} />
    <g fill='none'>
      <path d='M24.500 880V859M21 864l3.500-5 3.500 5' stroke='#e33' /><path d='M25 880l8-15M27 866l6-2v6' stroke='#33c' /><path d='M25 880.500h19M40 877l4 3.500-4 3' stroke='#3a8a3a' />
    </g>
    <g fontFamily='Open Sans' fontWeight='bold' fontSize='17'>
      <text x='18' y='851' fill='#e81515'>Z</text><text x='30' y='858' fill='#1515e8'>Y</text><text x='46' y='879' fill='#0b8a1a'>X</text>
    </g>
  </Scene>
)

/* ---------- section shapes ---------- */

const shapes = {
  bar: 'M3 7h22v14H3z',
  tee: 'M3 3h22v3h-9v19h-4V6H3z',
  teeUp: 'M3 25h22v-3h-9V3h-4v19H3z',
  beam: 'M5 3h18v3h-7v16h9v3H3v-3h9V6H5z',
  channel: 'M7 3h12v3h-8v16h8v3H7z',
  box: 'M3 3h22v22H3zM7 7v14h14V7z',
  ring: 'M14 3a11 11 0 1 0 .01 0zM14 8a6 6 0 1 1-.01 0z',
  joist: 'M12 3h4v4.500h4V10l-4 7v8h-4v-8l-4-7V7.500h4z',
  plus: 'M12 3h4v9h9v4h-9v9h-4v-9H3v-4h9z',
  angle: 'M8 5h12v3h-8v17H8z'
}
const sections = [
  ['Брус', 'bar'], ['Тавр_Т', 'tee'], ['Тавр_L', 'teeUp'],
  ['Двутавр', 'beam'], ['Швеллер', 'channel'], ['Коробка', 'box'],
  ['Кольцо', 'ring'], ['Балка', 'joist'], ['Крест', 'plus'],
  ['Угол', 'angle'], ['Несимм.та...', 'tee'], ['Несимм.та...', 'teeUp'],
  ['Брусˣˣ', 'bar'], ['Двутаврˣˣ', 'beam']
]

const Shape = ({ kind, selected }) => (
  <svg width='28' height='28' viewBox='0 0 28 28' fillRule='evenodd' aria-hidden='true'>
    <path d={shapes[kind]} fill='none' stroke={selected ? '#1c3d66' : '#222'} strokeWidth='5' />
    <path d={shapes[kind]} fill={selected ? '#4678b4' : '#aaa'} stroke={selected ? '#5b8cc6' : '#aaa'} strokeWidth='3' />
    <path d={shapes[kind]} fill='url(#hatch)' />
  </svg>
)

const SectionPreview = () => (
  <svg width='180' height='130' viewBox='0 0 180 130' fontFamily='Open Sans' fontSize='12' aria-hidden='true'>
    <path d='M74.500 33.500h33v65h-33z' fill='#808080' stroke='#000' strokeWidth='2' />
    <g stroke='#e2253c' fill='none'>
      <path d='M90.500 66V12M87 16l3.500-5 3.500 5M63.500 34v66M61 36l5-3M61 101l5-3M73 109.500h37M73 111l4-3M106 111l4-3' />
    </g>
    <path d='M90 66.500h78M164 63l5 3.500-5 3.500' stroke='#4638e0' fill='none' />
    <g fill='#d6334a'>
      <text x='99' y='15'>Z1</text><text x='76' y='124'>40.00</text><text transform='translate(57 80) rotate(-90)'>80.00</text>
    </g>
    <text x='161' y='60' fill='#5a48e6'>Y1</text>
  </svg>
)

/* ---------- dialogs content ---------- */

const StiffnessDialog = () => (
  <Dialog $x={584} $y={5} $w={460}>
    <DialogTitle>
      <DialogIcon /><TitleText>Жесткости и материалы</TitleText>
      <PlainButton aria-label='Закрыть'><Cross c='#8a8a8a' /></PlainButton>
    </DialogTitle>
    <StiffBody>
      <Columns>
        <AssignMain>
          <Caption as='span' $pad={4}>Назначить элементам схемы</Caption>
          <CheckLabel><CheckBox type='checkbox' />Жесткость:</CheckLabel>
          <Indent><TextBox $tall aria-label='Жесткость' defaultValue='' /></Indent>
          <NormRow>
            <NormSelect>
              <select aria-label='Нормы'><option>СНиП 2.03.01-84*</option></select><Triangle s={8} c='#111' />
            </NormSelect>
            <Dim htmlFor='variant'>Вариант</Dim>
            <Spin>
              <input id='variant' defaultValue='1' disabled />
              <svg width='8' height='12' viewBox='0 0 8 12' aria-hidden='true'><path d='M1 4l2-3 2 3zM1 8l2 3 2-3z' fill='#666' /></svg>
            </Spin>
            <PushButton disabled $w={27} $h={23} aria-label='Добавить вариант'>
              <svg width='17' height='17' viewBox='0 0 17 17'><path d='M6 1h5v5h5v5h-5v5H6v-5H1V6h5z' fill='#80809a' /></svg>
            </PushButton>
          </NormRow>
          <Materials>
            <thead><tr><th width='129' /><th width='118'>Бетон:</th><th>Арматура:</th></tr></thead>
            <tbody><tr><td /><td>&lt;нет&gt;</td><td>&lt;нет&gt;</td></tr></tbody>
          </Materials>
        </AssignMain>
        <SideTools>
          <PushButton disabled $w={35} $h={23} aria-label='Применить'><CheckIcon c='#b0b09a' /></PushButton>
          <PushButton disabled $w={35} $h={23} aria-label='Фильтр'>
            <svg width='18' height='18' viewBox='0 0 18 18'><path d='M2 2h14l-5 7v7H8V9z' fill='#b9b9b9' stroke='#9f9f9f' /><path d='M5 3h9l-4 6z' fill='#d24a68' /></svg>
          </PushButton>
          <PushButton disabled $w={35} $h={23} aria-label='Вырезать'>
            <svg width='18' height='18' viewBox='0 0 18 18'><path d='M4 2l8 11M13 2L6 13' stroke='#b4b4b4' strokeWidth='2' /><path d='M2 13h4v3H2zM12 13h4v3h-4z' fill='#a9b8b0' /></svg>
          </PushButton>
          <PushButton $w={35} $h={23} aria-label='Отметить'><Icon name='person' /></PushButton>
          <PushButton $w={35} $h={23} aria-label='Справка'><QIcon /></PushButton>
        </SideTools>
      </Columns>
      <StiffTabs>
        <StiffTab $after={20}>Ж/Б</StiffTab>
        <StiffTab $after={192}>Сталь</StiffTab>
        <SquareTools>
          <PushButton $w={25} $h={26} aria-label='Копировать список'><Icon name='pagesNum' /></PushButton>
          <PushButton disabled $w={25} $h={26} aria-label='Вставить список'>
            <svg width='18' height='18' viewBox='0 0 18 18'><path d='M2 3h14v12H2z' fill='#ddd' stroke='#a2a2a2' /><path d='M5 6h7M7 9h7v4H7z' stroke='#8b8b8b' fill='#aaa' /></svg>
          </PushButton>
        </SquareTools>
      </StiffTabs>
      <StiffPanel>
        <Stack>
          <Caption as='span' $pad={4}>Список типов жесткостей</Caption>
          <ListBox $w={263} $h={303} />
          <PushButton>Назначить текущим</PushButton>
        </Stack>
        <Actions>
          <PushButton>Отметить на схеме</PushButton>
          <PushButton $active>Добавить&lt;&lt;</PushButton>
          <PushButton>Изменить...</PushButton>
          <PushButton>Просмотр...</PushButton>
          <PushButton>Копировать</PushButton>
          <PushButton>Удалить</PushButton>
          <SmallTools>
            <PushButton $w={24} aria-label='Обновить'>
              <svg width='18' height='16' viewBox='0 0 18 16' fill='none' stroke='#3d9a44' strokeWidth='2'><path d='M8 13C4 12 4 9 5 5M2 7l3-4 4 3M10 4c4 0 4 4 3 7M9 9l4 4 3-5' /></svg>
            </PushButton>
            <PushButton $w={24} aria-label='Сечения'>
              <svg width='22' height='14' viewBox='0 0 22 14' fill='none' stroke='#3030b0' strokeWidth='2'><path d='M2 4h5v6H2zM9 4h6M12 4v6M9 10h6M19 2v10M17 7h4' /></svg>
            </PushButton>
            <PushButton $w={23} aria-label='Сортировка'>
              <svg width='20' height='18' viewBox='0 0 20 18' fill='none' stroke='#6e6e2e' strokeWidth='2'><path d='M4 2v13h13M2 5l2-4 2 4M8 11h6' /></svg>
            </PushButton>
          </SmallTools>
        </Actions>
      </StiffPanel>
    </StiffBody>
    <DialogFoot $h={17}><ResizeGrip /></DialogFoot>
  </Dialog>
)

const PickerDialog = () => (
  <Dialog $x={1061} $y={5} $w={356}>
    <DialogTitle>
      <DialogIcon /><TitleText>Добавить жесткость</TitleText>
      <PlainButton aria-label='Закрыть'><Cross c='#8a8a8a' /></PlainButton>
    </DialogTitle>
    <PickBody>
      <PickHead>
        <p>Задать параметры новой жесткости и добавить<br />ее в список:</p>
        <Stack $gap={11}>
          <PushButton $w={38} $h={22} aria-label='Применить'><CheckIcon /></PushButton>
          <PushButton $w={38} $h={22} aria-label='Справка'><QIcon /></PushButton>
        </Stack>
      </PickHead>
      <PickTabs>
        <PickTab $on $w={49} aria-label='Стандартные'>
          <svg width='14' height='14' viewBox='0 0 14 14'><path d='M1 1h12v12H1z' fill='#bbb' stroke='#222' strokeWidth='1.500' /><path d='M3 3h8v8H3z' fill='url(#hatch)' /></svg>
        </PickTab>
        <PickTab $w={32} aria-label='Прокат'>
          <svg width='10' height='13' viewBox='0 0 10 13'><path d='M0 1.500h10M0 11.500h10M5 1v10' stroke='#111' strokeWidth='2.500' /></svg>
        </PickTab>
        <PickTab $w={62}>EE</PickTab>
      </PickTabs>
      <PickPanel>
        <h3>Стандартные типы сечений</h3>
        <SectionList>
          {sections.map(([name, kind], i) => (
            <SectionItem key={i}><Shape kind={kind} selected={i === 0} />{name}</SectionItem>
          ))}
        </SectionList>
      </PickPanel>
    </PickBody>
    <DialogFoot $h={15}><ResizeGrip /></DialogFoot>
  </Dialog>
)

const params = [
  ['E', '0', 'т/м²'],
  ['B', '40', 'см'],
  ['H', '80', 'см'],
  ['Ro', '0', 'т/м³']
]

const ParamsDialog = () => (
  <Dialog $front $x={281} $y={142} $w={409}>
    <DialogTitle $front>
      <TitleText>Задание стандартного сечения</TitleText>
      <PlainButton aria-label='Закрыть'><Cross c='#333' /></PlainButton>
    </DialogTitle>
    <ParamsBody>
      <ParamsTop>
        <div>
          <ParamGrid>
            {params.map(([name, value, unit], i) => (
              <React.Fragment key={name}>
                <label htmlFor={name}>{name}</label>
                {i === 0
                  ? <CaretBox><TextBox id={name} $active defaultValue={value} /></CaretBox>
                  : <TextBox id={name} defaultValue={value} />}
                <Unit>{unit}</Unit>
              </React.Fragment>
            ))}
          </ParamGrid>
          <NonLinear>
            <CheckLine as='label'>Учет нелинейности<CheckBox type='checkbox' /></CheckLine>
            <PushButton disabled $h={25}>Параметры материала</PushButton>
            <PushButton disabled $h={25}>Параметры арматуры</PushButton>
          </NonLinear>
        </div>
        <Stack $gap={12} $align='center'>
          <Preview><SectionPreview /></Preview>
          <DrawLine><PushButton $w={82} $h={23}>Нарисовать</PushButton></DrawLine>
          <ShearLine as='label'>Учет сдвига<CheckBox type='checkbox' /></ShearLine>
        </Stack>
      </ParamsTop>
      <CommentRow>
        <CommentField>
          <Caption htmlFor='comment' $pad={4}>Комментарий</Caption>
          <TextBox $tall id='comment' defaultValue='Нижние ветви всех колонн' />
        </CommentField>
        <Stack $gap={4} $align='center'>
          <Caption htmlFor='color'>Цвет</Caption>
          <PushButton $w={34} $h={24} id='color'><Swatch /></PushButton>
        </Stack>
      </CommentRow>
      <Confirm>
        <PushButton $w={37} $h={22} aria-label='OK'><CheckIcon /></PushButton>
        <PushButton $w={37} $h={22} aria-label='Отмена'><RedX /></PushButton>
        <PushButton $w={33} $h={22} aria-label='Справка'><QIcon /></PushButton>
      </Confirm>
    </ParamsBody>
  </Dialog>
)

const menu = ['Файл', 'Режим', 'Вид', 'Выбор', 'Схема', 'Создание', 'Редактирование', 'Жесткости', 'Нагрузки', 'Опции', 'Окно', '?']

const App = () =>
  <Page>
    <GlobalStyle />
    <svg width='0' height='0' aria-hidden='true'>
      <pattern id='hatch' width='3' height='3' patternUnits='userSpaceOnUse' patternTransform='rotate(45)'>
        <path d='M1.500 0v3' stroke='#0a0a0a' strokeWidth='2' />
      </pattern>
    </svg>
    <TitleBar>
      <svg width='16' height='18' viewBox='0 0 16 18' aria-hidden='true'><path d='M0 1h14v15H0z' fill='#a7cbd2' /><path d='M0 1h4v15H0zM7 3h3v11H7z' fill='#38808f' /><path d='M4 6h8v3H4z' fill='#e9f4f5' /></svg>
      <AppTitle>ПК ЛИРА-САПР  2013 R5 (некоммерческая) x64 - пример опз</AppTitle>
      <WindowButtons>
        <PlainButton aria-label='Свернуть'><svg width='20' height='11' viewBox='0 0 20 11'><path d='M5 5.500h11' stroke='#999' /></svg></PlainButton>
        <PlainButton aria-label='Развернуть'><svg width='20' height='11' viewBox='0 0 20 11'><path d='M5.500 3.500h8v7h-8zM7.500 3V.5h8v7h-2' fill='none' stroke='#999' /></svg></PlainButton>
        <PlainButton aria-label='Закрыть'><svg width='20' height='11' viewBox='0 0 20 11'><path d='M5 .5l10 10M15 .5l-10 10' stroke='#999' /></svg></PlainButton>
      </WindowButtons>
    </TitleBar>
    <MenuBar>
      <Grip $light style={{ width: 3 }} />
      {menu.map(item => <MenuItem key={item} href='#'>{item}</MenuItem>)}
    </MenuBar>

    <ToolRow $h={29}>
      <ToolBar><Grip /><Tools items={topTools} /></ToolBar><CapButton />
      <ToolBar><Grip $wide /><Tools items={viewTools} /></ToolBar><CapButton />
    </ToolRow>
    <ToolRow $h={29}>
      <ToolBar>
        <Grip $wide /><Tools items={schemeTools} />
        <ComboBox label='Вариант' value='1. Вариант 1' />
        <Tools items={loadTools} />
        <ComboBox label='Загружение' value='1. Загружение 1' />
        <Tools items={['loads']} />
      </ToolBar>
      <CapButton />
    </ToolRow>
    <ToolRow $h={30}>
      <ToolBar><Grip /><Tools items={selectTools} /></ToolBar><CapButton />
    </ToolRow>

    <TabStrip>
      <DocTab>
        <svg width='17' height='18' viewBox='0 0 17 18' aria-hidden='true'><path d='M3 2l10-1 3 2v13l-3 1H3L1 14V4z' fill='#5fa3b5' stroke='#8ab' /><path d='M5 4v10M12 3v12' stroke='#a9d4dd' /></svg>
        <span>пример опз</span>
        <PlainButton aria-label='Закрыть вкладку'><Cross c='#555' s={9} /></PlainButton>
      </DocTab>
      <TabListButton aria-label='Список вкладок'><Triangle s={10} c='#4b4d54' /></TabListButton>
    </TabStrip>

    <Canvas>
      <Scheme />
      <StiffnessDialog />
      <PickerDialog />
      <ParamsDialog />
      <Pointer width='10' height='17' viewBox='0 0 10 17' aria-hidden='true'><path d='M0 0l9 8-4 1 3 5-2 1-3-5-3 3z' fill='#111' /></Pointer>
    </Canvas>

    <StatusBar>
      <StatusCell $w={155}>Уз.: 0 / 51</StatusCell>
      <StatusCell $w={150}>Эл.: 6 / 68</StatusCell>
      <StatusCell $w={90}>Загр.: 1 / 1</StatusCell>
    </StatusBar>
  </Page>

export default App
